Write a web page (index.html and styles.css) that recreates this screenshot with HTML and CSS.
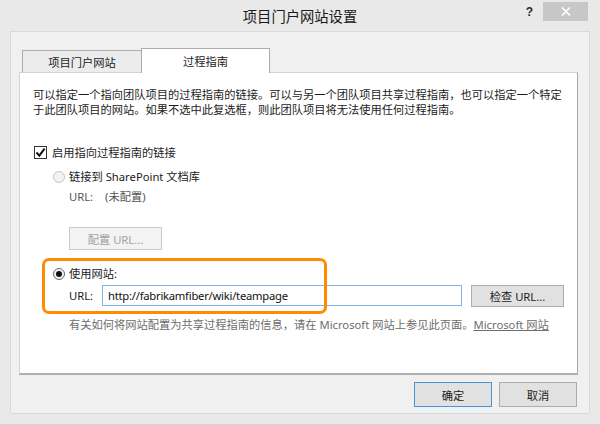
FILE: index.html
```html
<!DOCTYPE html>
<html lang="zh-CN">
<head>
<meta charset="utf-8">
<title>项目门户网站设置</title>
<link rel="stylesheet" href="styles.css">
</head>
<body>
<div class="window">
  <div class="titlebar">
    <div class="tb-spacer"></div>
    <div class="title">项目门户网站设置</div>
    <div class="controls">
      <span class="help">?</span>
      <span class="close"><svg width="10" height="9" viewBox="0 0 10 9"><path d="M1 0.5 L9 8.5 M9 0.5 L1 8.5" stroke="#fff" stroke-width="1.6" fill="none"/></svg></span>
    </div>
  </div>
  <div class="client">
    <div class="tabs">
      <div class="tab">项目门户网站</div>
      <div class="tab active">过程指南</div>
    </div>
    <div class="panel">
      <p class="intro">可以指定一个指向团队项目的过程指南的链接。可以与另一个团队项目共享过程指南，也可以指定一个特定于此团队项目的网站。如果不选中此复选框，则此团队项目将无法使用任何过程指南。</p>
      <div class="row check-row">
        <span class="checkbox"><svg width="11" height="11" viewBox="0 0 11 11"><path d="M1.5 5.5 L4.3 8.6 L9.6 1.6" stroke="#111" stroke-width="2" fill="none"/></svg></span>
        <span>启用指向过程指南的链接</span>
      </div>
      <div class="sub">
        <div class="row radio-row">
          <span class="radio off"></span>
          <span>链接到 SharePoint 文档库</span>
        </div>
        <div class="url-info">
          <span class="url-label">URL:</span>
          <span>(未配置)</span>
        </div>
        <div class="indent">
          <button class="btn disabled">配置 URL...</button>
        </div>
        <div class="row radio-row second">
          <span class="radio on"></span>
          <span>使用网站:</span>
        </div>
        <div class="url-row">
          <span class="url-label dark">URL:</span>
          <div class="input">http://fabrikamfiber/wiki/teampage</div>
          <button class="btn check">检查 URL...</button>
        </div>
        <p class="help-text">有关如何将网站配置为共享过程指南的信息，请在 Microsoft 网站上参见此页面。<span class="link">Microsoft 网站</span></p>
      </div>
      <div class="highlight"></div>
    </div>
    <div class="actions">
      <button class="btn default">确定</button>
      <button class="btn">取消</button>
    </div>
  </div>
</div>
</body>
</html>
```

FILE: styles.css
```css
* { box-sizing: border-box; }

html, body {
  margin: 0;
  padding: 0;
}

body {
  width: 600px;
  height: 425px;
  overflow: hidden;
  background: #e9e9e9;
  font-family: "Noto Sans", "Noto Sans CJK SC", sans-serif;
  font-size: 11.25px;
  color: #1b1b1b;
}

.window {
  width: 600px;
  height: 425px;
  display: flex;
  flex-direction: column;
  border-bottom: 1px solid #d6d6d6;
}

.titlebar {
  height: 31px;
  display: grid;
  grid-template-columns: 1fr auto 1fr;
  flex: none;
}

.title {
  font-family: "Noto Sans CJK SC", sans-serif;
  font-size: 14.3px;
  line-height: 16px;
  padding-top: 8px;
  color: #1a1a1a;
}

.controls {
  justify-self: end;
  display: flex;
  align-items: flex-start;
  padding-right: 12px;
}

.help {
  font-family: "Liberation Sans", sans-serif;
  font-weight: bold;
  font-size: 12px;
  line-height: 12px;
  margin-top: 6px;
  margin-right: 10px;
  color: #2a2a2a;
}

.close {
  width: 45px;
  height: 19px;
  margin-top: 2px;
  background: #c7c7c7;
  display: flex;
  align-items: center;
  justify-content: center;
}

.client {
  margin: 0 10px;
  height: 383px;
  background: #f0f0f0;
  border: 1px solid #d9d9d9;
  padding: 16px 11px 0 8px;
  display: flex;
  flex-direction: column;
}

.tabs {
  display: flex;
  align-items: flex-end;
  height: 24px;
  padding-left: 3px;
  position: relative;
  z-index: 1;
}

.tab {
  width: 120px;
  height: 22px;
  border: 1px solid #acacac;
  border-bottom: none;
  background: #ececec;
  text-align: center;
  font-family: "Noto Sans CJK SC", sans-serif;
  line-height: 20px;
  padding-top: 1px;
}

.tab.active {
  width: 129px;
  height: 25px;
  margin-left: -1px;
  margin-bottom: -1px;
  background: #fff;
  line-height: 22px;
}

.panel {
  position: relative;
  height: 303px;
  background: #fff;
  border: 1px solid #d3d3d3;
  border-right-color: #a8a8a8;
  border-bottom: 2px solid #b0b0b0;
  padding: 14px 10px 0 13px;
}

.intro {
  margin: 0;
  line-height: 15px;
  font-family: "Noto Sans CJK SC", sans-serif;
}

.row {
  display: flex;
  align-items: center;
  height: 15px;
  line-height: 15px;
}

.check-row {
  margin-top: 28px;
  margin-left: 1px;
}

.checkbox {
  width: 13px;
  height: 13px;
  border: 1px solid #333;
  background: #fff;
  margin-right: 5px;
  display: flex;
  align-items: center;
  justify-content: center;
}

.sub {
  margin-left: 20px;
}

.radio-row {
  margin-top: 9px;
}

.radio-row.second {
  margin-top: 16px;
}

.radio {
  width: 12px;
  height: 12px;
  border-radius: 50%;
  margin-right: 4px;
  flex: none;
}

.radio.off {
  border: 1px solid #c6c6c6;
  background: #f3f3f3;
}

.radio.on {
  border: 1px solid #6a6a6a;
  background: #f4f4f4;
  display: flex;
  align-items: center;
  justify-content: center;
}

.radio.on::after {
  content: "";
  width: 6px;
  height: 6px;
  border-radius: 50%;
  background: #111;
}

.url-info {
  margin-top: 5px;
  padding-left: 16px;
  line-height: 15px;
  color: #555;
  display: flex;
}

.url-label {
  width: 36px;
}

.indent {
  padding-left: 16px;
  margin-top: 23px;
}

.btn {
  font-family: "Noto Sans", "Noto Sans CJK SC", sans-serif;
  font-size: 11.25px;
  height: 23px;
  padding: 0;
  border: 1px solid #adadad;
  background: #e1e1e1;
  color: #1b1b1b;
}

.btn.disabled {
  width: 93px;
  border-color: #cbcbcb;
  background: #f3f3f3;
  color: #a2a2a2;
}

.url-row {
  display: flex;
  align-items: center;
  margin-top: 3px;
  padding-left: 16px;
  height: 23px;
}

.url-label.dark {
  width: 33px;
  color: #1b1b1b;
}

.input {
  width: 360px;
  height: 21px;
  border: 1px solid #7eb4ea;
  padding-left: 5px;
  line-height: 19px;
  color: #111;
  letter-spacing: -0.25px;
}

.btn.check {
  width: 93px;
  height: 22px;
  margin-left: 9px;
}

.help-text {
  margin: 10px 0 0 16px;
  line-height: 15px;
  color: #6d6d6d;
}

.link {
  text-decoration: underline;
}

.highlight {
  position: absolute;
  left: 22px;
  top: 185px;
  width: 285px;
  height: 56px;
  border: 3px solid #ff8c00;
  border-radius: 7px;
  pointer-events: none;
}

.actions {
  display: flex;
  justify-content: flex-end;
  gap: 7px;
  margin-top: 7px;
  padding-right: 1px;
}

.actions .btn {
  width: 78px;
  height: 25px;
}

.btn.default {
  border-color: #4a93d6;
}
```
